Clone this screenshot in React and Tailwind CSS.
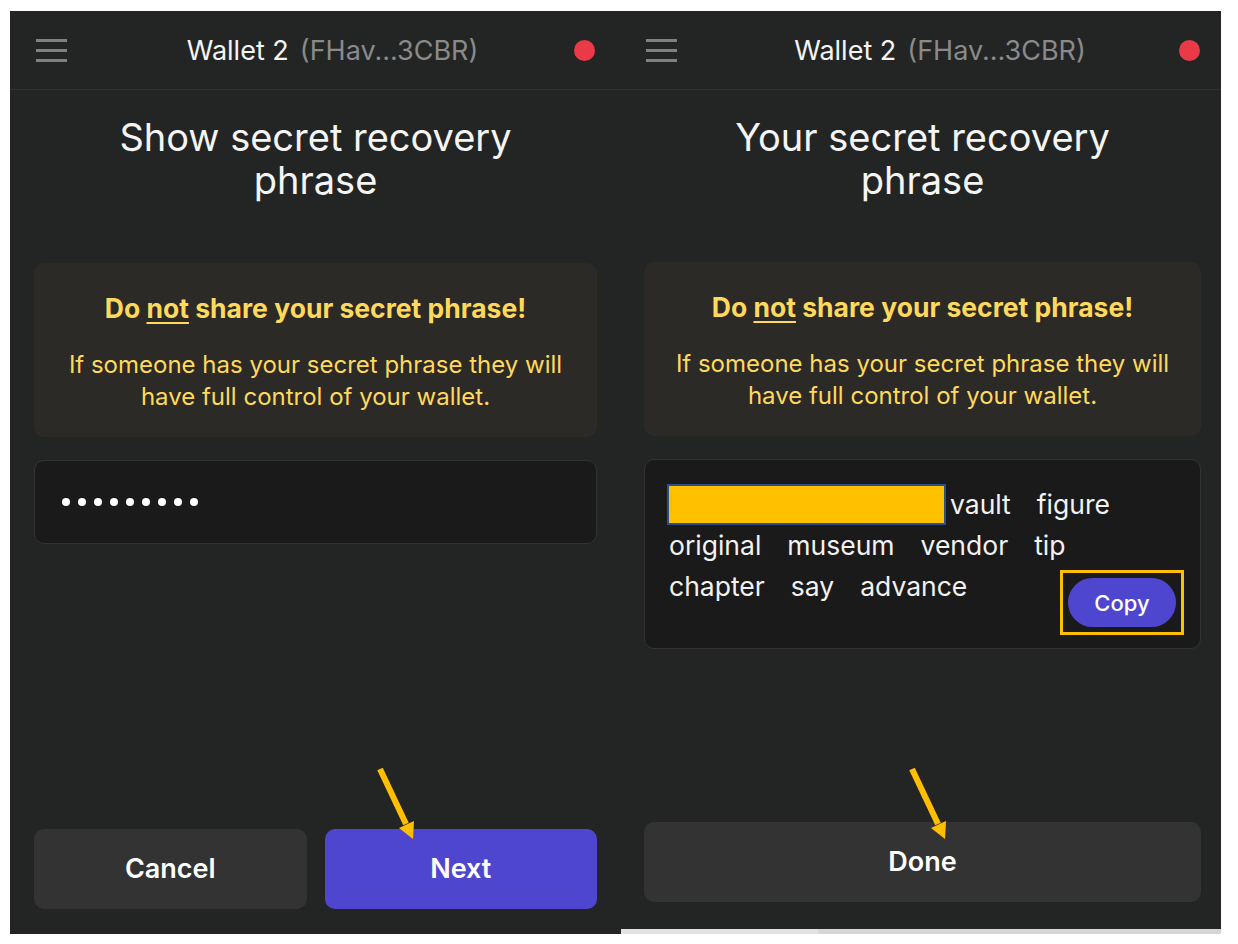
import React from "react";

function Arrow({ className }) {
  return (
    <svg className={className} width="50" height="80" viewBox="0 0 50 80" fill="none">
      <line x1="8" y1="7" x2="34" y2="62" stroke="#ffbf00" strokeWidth="6" />
      <polygon points="27,66 42,59 41,77" fill="#ffbf00" />
    </svg>
  );
}

function Header({ pl, pr }) {
  return (
    <div className={`h-[79px] flex items-center border-b border-[#2f3131] ${pl} ${pr}`}>
      <div className="flex flex-col gap-[7px] w-[31px]">
        <span className="h-[3px] bg-[#808080]" />
        <span className="h-[3px] bg-[#808080]" />
        <span className="h-[3px] bg-[#808080]" />
      </div>
      <div className="flex-1 flex justify-center items-baseline gap-[11px] pl-[24px] text-[27px] leading-none">
        <span className="text-[#f4f4f4]">Wallet 2</span>
        <span className="text-[#8a8a8a]">(FHav...3CBR)</span>
      </div>
      <span className="w-[21px] h-[21px] rounded-full bg-[#eb3a47]" />
    </div>
  );
}

function Warning() {
  return (
    <div className="h-[174px] rounded-[10px] bg-[#2c2a26] pt-[29px] text-center text-[#ffd95c]">
      <p className="text-[26.5px] leading-[32px] font-bold">
        Do <span className="underline underline-offset-[4px] decoration-2">not</span> share your secret phrase!
      </p>
      <p className="mt-[25px] text-[24px] leading-[32px]">
        If someone has your secret phrase they will
        <br />
        have full control of your wallet.
      </p>
    </div>
  );
}

function Title({ children }) {
  return (
    <h1 className="mt-[26px] text-center text-[38px] leading-[43px] text-[#f5f5f5] font-normal">{children}</h1>
  );
}

export default function App() {
  return (
    <div className="w-[1238px] h-[944px] bg-white font-['Inter',sans-serif]">
      <div className="flex pt-[11px] pl-[10px]">
        {/* left: enter password */}
        <div className="relative w-[611px] h-[923px] bg-[#232524] flex flex-col">
          <Header pl="pl-[26px]" pr="pr-[26px]" />
          <div className="flex-1 flex flex-col px-[24px] pb-[25px]">
            <Title>
              Show secret recovery
              <br />
              phrase
            </Title>
            <div className="mt-[61px]">
              <Warning />
            </div>
            <div className="mt-[23px] h-[84px] rounded-[10px] bg-[#1a1a1a] border border-[#333] flex items-center gap-[8px] pl-[27px]">
              {Array.from({ length: 9 }).map((_, i) => (
                <span key={i} className="w-[8px] h-[8px] rounded-full bg-white" />
              ))}
            </div>
            <div className="flex-1" />
            <div className="flex gap-[18px]">
              <button className="flex-1 h-[80px] rounded-[10px] bg-[#333333] text-white text-[27px] font-semibold">Cancel</button>
              <button className="flex-1 h-[80px] rounded-[10px] bg-[#4f46cf] text-white text-[27px] font-semibold">Next</button>
            </div>
          </div>
          <Arrow className="absolute left-[362px] top-[751px]" />
        </div>

        {/* right: phrase revealed */}
        <div className="w-[600px] flex flex-col">
          <div className="relative h-[918px] bg-[#232524] flex flex-col">
            <Header pl="pl-[25px]" pr="pr-[21px]" />
            <div className="flex-1 flex flex-col pl-[23px] pr-[20px] pb-[27px]">
              <Title>
                Your secret recovery
                <br />
                phrase
              </Title>
              <div className="mt-[60px]">
                <Warning />
              </div>
              <div className="mt-[23px] h-[190px] rounded-[10px] bg-[#1a1a1a] border border-[#333] pt-[24px] pl-[22px] pr-[16px] text-[26.5px] leading-[41px] text-[#f2f2f2]">
                <div className="flex gap-[26px]">
                  <div className="flex">
                    <span className="w-[279px] h-[41px] bg-[#ffc000] border-2 border-[#2d4e8e]" />
                    <span className="ml-[4px]">vault</span>
                  </div>
                  <span>figure</span>
                </div>
                <div className="flex gap-[26px] pl-[2px]">
                  <span>original</span>
                  <span>museum</span>
                  <span>vendor</span>
                  <span>tip</span>
                </div>
                <div className="flex justify-between items-start pl-[2px]">
                  <div className="flex gap-[26px]">
                    <span>chapter</span>
                    <span>say</span>
                    <span>advance</span>
                  </div>
                  <div className="mt-[4px] border-[3px] border-[#ffbf00] p-[5px]">
                    <button className="w-[108px] h-[49px] rounded-full bg-[#4f46cf] text-white text-[22px] font-medium leading-none">Copy</button>
                  </div>
                </div>
              </div>
              <div className="flex-1" />
              <button className="h-[80px] rounded-[10px] bg-[#333333] text-white text-[27px] font-semibold">Done</button>
            </div>
            <Arrow className="absolute left-[283px] top-[751px]" />
          </div>
          <div className="h-[5px] flex">
            <div className="w-[197px] bg-[#e2e2e2]" />
            <div className="flex-1 bg-[#d6d6d6]" />
          </div>
        </div>
      </div>
    </div>
  );
}
